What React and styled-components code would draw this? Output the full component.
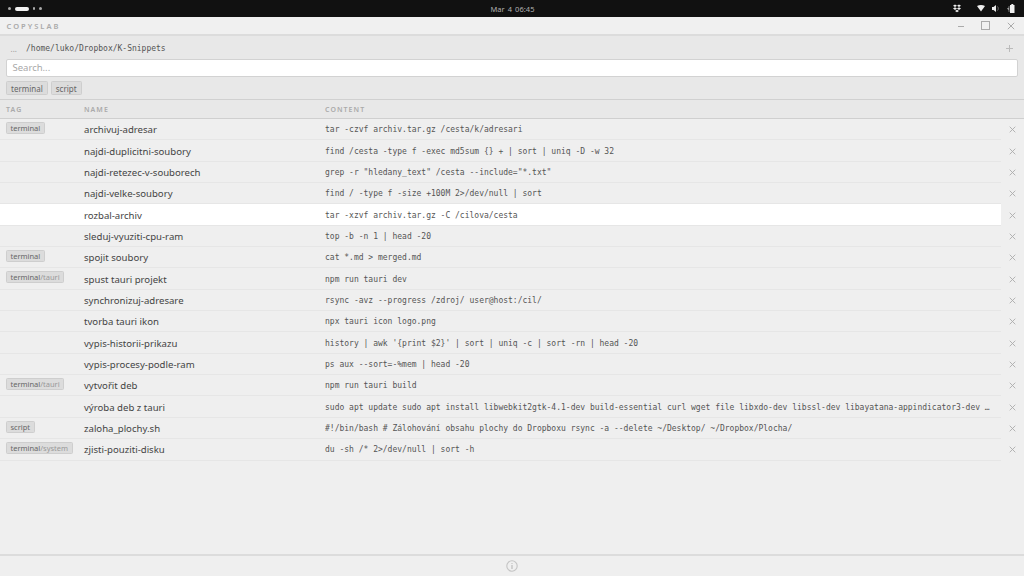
import React from 'react';
import styled, { createGlobalStyle } from 'styled-components';

const Global = createGlobalStyle`
  html, body { margin: 0; padding: 0; background: #efefef; overflow: hidden; }
  * { box-sizing: border-box; }
`;
const Screen = styled.div`
  width: 1024px; height: 576px; display: flex; flex-direction: column;
  font-family: "Noto Sans", "Open Sans", sans-serif; background: #efefef; color: #444;
`;
const StatusBar = styled.div`
  height: 17px; flex: none; background: #111; display: grid; grid-template-columns: 1fr auto 1fr; align-items: center; padding: 0 8px;
`;
const Workspaces = styled.div`display: flex; align-items: center; gap: 4px;`;
const Dot = styled.span`
  display: block; height: ${p => (p.$wide ? 4 : 2.5)}px; width: ${p => (p.$wide ? 14 : 2.5)}px;
  border-radius: 3px; background: ${p => (p.$wide ? '#f2f2f2' : '#aaa')};
`;
const Clock = styled.div`font-size: 7.5px; color: #b0b0b0; word-spacing: 1px; letter-spacing: .05px; padding-left: 1px;`;
const Tray = styled.div`display: flex; justify-content: flex-end; align-items: center; color: #eee;`;
const TitleBar = styled.div`
  height: 19px; flex: none; background: #f0f0f0; border-bottom: 2px solid #dcdcdc; display: flex; align-items: center;
  justify-content: space-between; padding: 0 9px 0 6.5px;
`;
const AppName = styled.div`font-size: 7.5px; font-weight: 600; letter-spacing: 2px; color: #aaa;`;
const WinButtons = styled.div`display: flex; align-items: center; gap: 17px; color: #aaa;`;
const Toolbar = styled.div`
  height: 64px; flex: none; background: #e8e8e8; border-bottom: 1px solid #d0d0d0; display: flex; flex-direction: column; padding: 0 6px;
`;
const PathRow = styled.div`height: 22.5px; flex: none; display: flex; align-items: center; padding-top: 2px;`;
const Ellipsis = styled.span`font-size: 8px; color: #999; width: 20px; padding-left: 4.5px;`;
const Path = styled.span`font-family: "DejaVu Sans Mono", monospace; font-size: 8px; color: #555;`;
const Plus = styled.span`margin-left: auto; margin-right: 5px; color: #bbb; display: flex;`;
const SearchBox = styled.div`
  height: 18.5px; flex: none; background: #fff; border: 1px solid #d2d2d2; border-radius: 2px;
  display: flex; align-items: center; padding-left: 5.5px; font-size: 9.5px; color: #a8a8a8;
`;
const TagFilters = styled.div`display: flex; gap: 3px; margin-top: 4px;`;
const FilterTag = styled.span`
  height: 14px; display: flex; align-items: center; padding: 0 4px; background: #dcdcdc; border: 1px solid #cecece; border-radius: 1.5px;
  font-size: 8px; color: #666;
`;
const HeaderRow = styled.div`
  height: 19px; flex: none; background: #e8e8e8; border-bottom: 1px solid #cfcfcf; display: grid; grid-template-columns: 78px 241px 1fr; align-items: center;
  font-size: 7px; font-weight: 600; letter-spacing: 1.05px; color: #aaa; padding-left: 6px;
`;
const List = styled.div`flex: 1; display: flex; flex-direction: column;`;
const Row = styled.div`
  height: 21.35px; flex: none; display: grid; grid-template-columns: 1001px 1fr; grid-template-rows: minmax(0, 1fr);
`;
const RowMain = styled.div`
  display: grid; grid-template-columns: 78px 241px minmax(0, 1fr); grid-template-rows: minmax(0, 1fr); align-items: center; min-width: 0; padding-left: 6px;
  background: ${p => (p.$active ? '#fff' : '#efefef')}; border-bottom: 1px solid #e6e6e6;
`;
const TagCell = styled.div`align-self: start; padding-top: 3px; display: flex;`;
const Tag = styled.span`
  display: inline-flex; align-items: center; height: 12px; padding: 0 3.5px; background: #dcdcdc; border: 1px solid #cecece; border-radius: 1.5px;
  font-size: 7.5px; color: #666;
`;
const SubTag = styled.span`color: #999;`;
const Name = styled.div`font-size: 9.6px; color: #444; padding-top: 1px; white-space: nowrap;`;
const Content = styled.div`
  font-family: "DejaVu Sans Mono", monospace; font-size: 8px; color: #555; white-space: nowrap; overflow: hidden; padding: 1px 8px 0 0;
`;
const RemoveCell = styled.div`display: flex; align-items: center; justify-content: center; color: #aaa; background: #efefef; padding-right: 1px;`;
const Footer = styled.div`
  height: 22px; flex: none; background: #efefef; border-top: 2px solid #dcdcdc; display: flex; align-items: center; justify-content: center; color: #c4c4c4;
`;

const Cross = ({ size = 7, w = 1 }) => (
  <svg width={size} height={size} viewBox="0 0 8 8" fill="none" stroke="currentColor" strokeWidth={w}>
    <path d="M.8.8l6.4 6.4M7.2.8L.8 7.2" />
  </svg>
);
const rows = [
  ['terminal', '', 'archivuj-adresar', 'tar -czvf archiv.tar.gz /cesta/k/adresari'],
  ['', '', 'najdi-duplicitni-soubory', 'find /cesta -type f -exec md5sum {} + | sort | uniq -D -w 32'],
  ['', '', 'najdi-retezec-v-souborech', 'grep -r "hledany_text" /cesta --include="*.txt"'],
  ['', '', 'najdi-velke-soubory', 'find / -type f -size +100M 2>/dev/null | sort'],
  ['', '', 'rozbal-archiv', 'tar -xzvf archiv.tar.gz -C /cilova/cesta', true],
  ['', '', 'sleduj-vyuziti-cpu-ram', 'top -b -n 1 | head -20'],
  ['terminal', '', 'spojit soubory', 'cat *.md > merged.md'],
  ['terminal', '/tauri', 'spust tauri projekt', 'npm run tauri dev'],
  ['', '', 'synchronizuj-adresare', 'rsync -avz --progress /zdroj/ user@host:/cil/'],
  ['', '', 'tvorba tauri ikon', 'npx tauri icon logo.png'],
  ['', '', 'vypis-historii-prikazu', "history | awk '{print $2}' | sort | uniq -c | sort -rn | head -20"],
  ['', '', 'vypis-procesy-podle-ram', 'ps aux --sort=-%mem | head -20'],
  ['terminal', '/tauri', 'vytvořit deb', 'npm run tauri build'],
  ['', '', 'výroba deb z tauri', 'sudo apt update sudo apt install libwebkit2gtk-4.1-dev build-essential curl wget file libxdo-dev libssl-dev libayatana-appindicator3-dev …'],
  ['script', '', 'zaloha_plochy.sh', '#!/bin/bash # Zálohování obsahu plochy do Dropboxu rsync -a --delete ~/Desktop/ ~/Dropbox/Plocha/'],
  ['terminal', '/system', 'zjisti-pouziti-disku', 'du -sh /* 2>/dev/null | sort -h'],
];

export default function App() {
  return (
    <Screen>
      <Global />
      <StatusBar>
        <Workspaces><Dot /><Dot $wide /><Dot /><Dot /></Workspaces>
        <Clock>Mar 4 06:45</Clock>
        <Tray>
          <svg width="64" height="11" viewBox="0 0 64 11" fill="currentColor">
            <path d="M3 1.500L5 2.800 3 4.100 1 2.800zM7 1.500L9 2.800 7 4.100 5 2.800zM3 4.300L5 5.600 3 6.900 1 5.600zM7 4.300L9 5.600 7 6.900 5 5.600zM5 6.700l2 1.200-2 1.300-2-1.300z" />
            <path d="M25 3c2.500-1.500 5.500-1.500 8 0l-4 5.500z" />
            <path d="M40 4h1.500L44 2v7L41.500 7H40z" /><path d="M45.500 3.500c1 1 1 3 0 4" stroke="#777" strokeWidth=".9" fill="none" />
            <path d="M58 2h4.500v8H58z" /><rect x="59.300" y="1" width="2" height="1" /><path d="M55 5.500l2-1v3z" opacity=".7" /><path d="M57 3v6" stroke="#888" strokeWidth=".8" />
          </svg>
        </Tray>
      </StatusBar>
      <TitleBar>
        <AppName>COPYSLAB</AppName>
        <WinButtons>
          <svg width="6" height="6" viewBox="0 0 6 6" stroke="currentColor"><path d="M0 3.500h6" /></svg>
          <svg width="9" height="9" viewBox="0 0 9 9" fill="none" stroke="currentColor"><rect x=".5" y=".5" width="8" height="8" /></svg>
          <Cross size={8} />
        </WinButtons>
      </TitleBar>
      <Toolbar>
        <PathRow>
          <Ellipsis>...</Ellipsis>
          <Path>/home/luko/Dropbox/K-Snippets</Path>
          <Plus><svg width="7" height="7" viewBox="0 0 7 7" stroke="currentColor"><path d="M3.500 0v7M0 3.500h7" /></svg></Plus>
        </PathRow>
        <SearchBox>Search...</SearchBox>
        <TagFilters><FilterTag>terminal</FilterTag><FilterTag>script</FilterTag></TagFilters>
      </Toolbar>
      <HeaderRow>
        <div>TAG</div><div>NAME</div><div>CONTENT</div>
      </HeaderRow>
      <List>
        {rows.map(([tag, sub, name, content, active]) => (
          <Row key={name}>
            <RowMain $active={active}>
              <TagCell>{tag && <Tag>{tag}{sub && <SubTag>{sub}</SubTag>}</Tag>}</TagCell>
              <Name>{name}</Name>
              <Content>{content}</Content>
            </RowMain>
            <RemoveCell><Cross size={7} /></RemoveCell>
          </Row>
        ))}
      </List>
      <Footer>
        <svg width="12" height="12" viewBox="0 0 12 12" fill="none" stroke="currentColor"><circle cx="6" cy="6" r="5.200" strokeWidth="1.100" /><path d="M6 5v4" strokeWidth="1.400" /><path d="M6 3v1" strokeWidth="1.200" /></svg>
      </Footer>
    </Screen>
  );
}
